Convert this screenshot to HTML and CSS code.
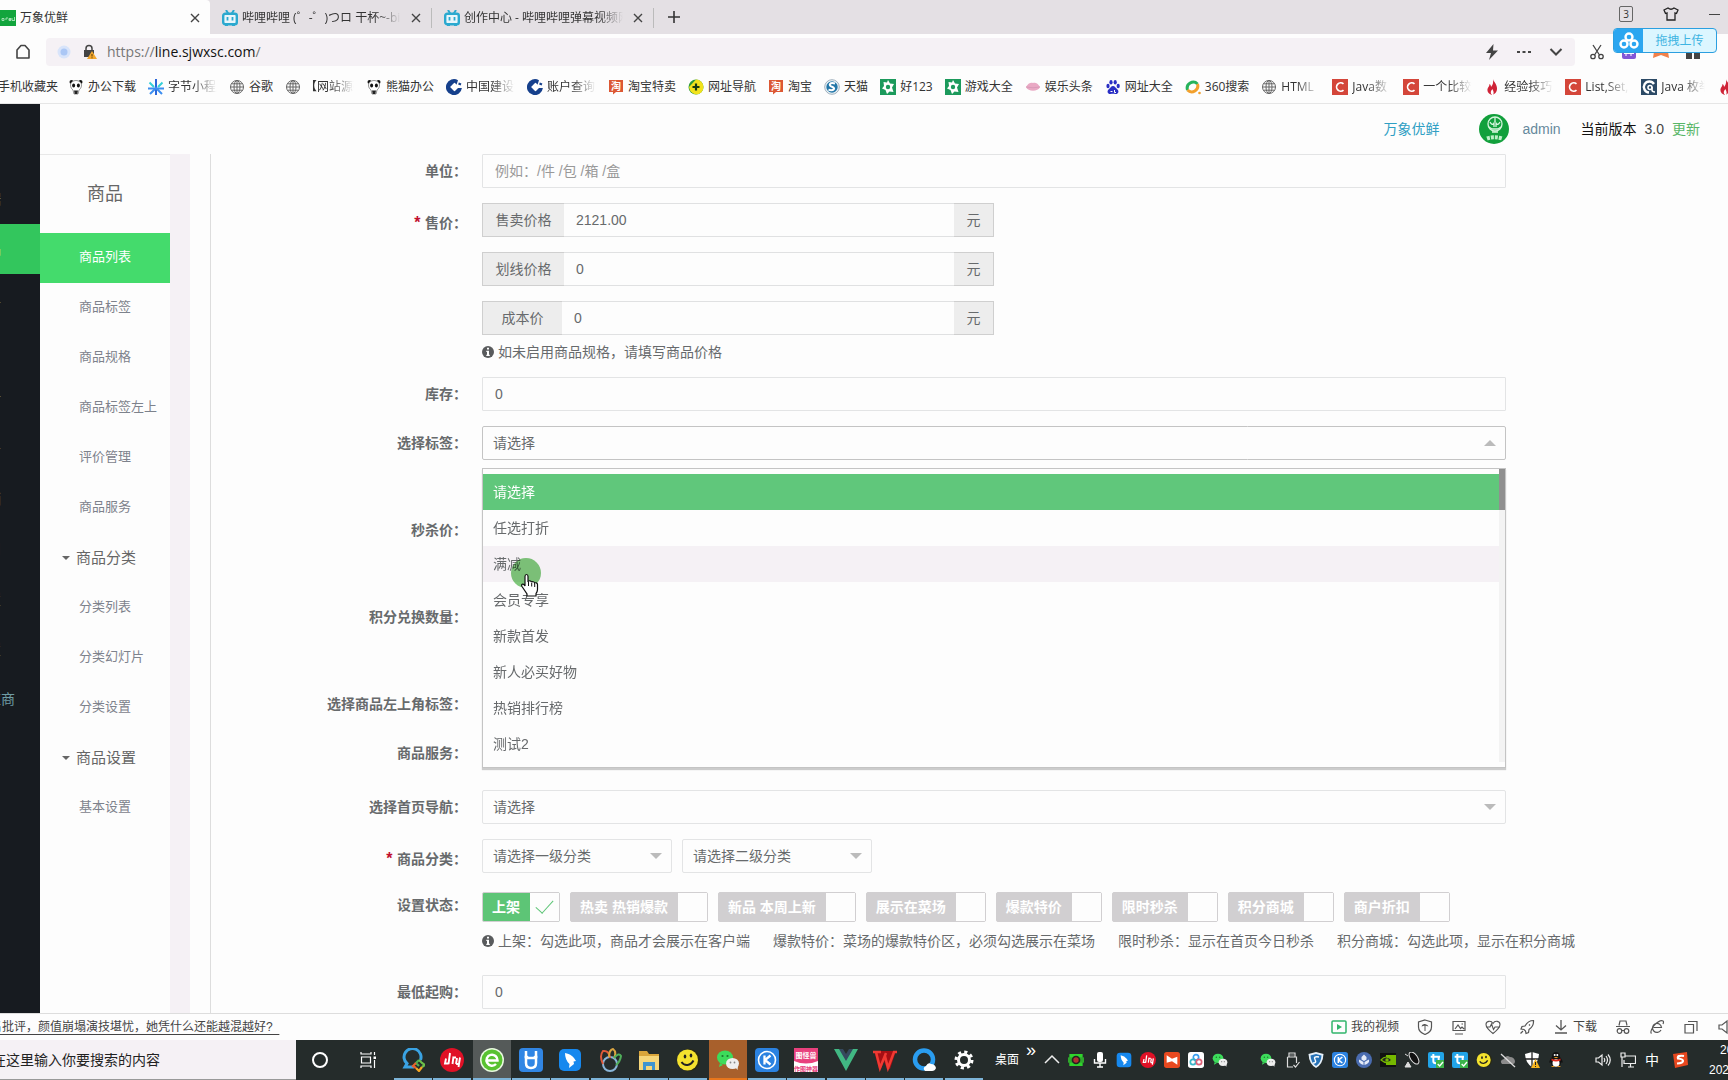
FILE: index.html
```html
<!DOCTYPE html>
<html lang="zh-CN">
<head>
<meta charset="utf-8">
<title>万象优鲜</title>
<link rel="stylesheet" href="styles.css">
</head>
<body>
<svg class="defs" aria-hidden="true">
  <symbol id="i-bili" viewBox="0 0 16 16"><path d="M4 0l2.500 4M12 0L9.500 4" stroke="#2ba9cf" stroke-width="2"/><rect x="1.200" y="3.800" width="13.600" height="10.500" rx="2" fill="#e9f6fa" stroke="#2ba9cf" stroke-width="2.400"/><path d="M5.500 7v3.500M10.500 7v3.500" stroke="#2ba9cf" stroke-width="1.800"/><path d="M3 15.500h3M10 15.500h3" stroke="#2ba9cf"/></symbol>
  <symbol id="i-close" viewBox="0 0 10 10"><path d="M1 1l8 8M9 1l-8 8" stroke="#444" stroke-width="1.400"/></symbol>
  <symbol id="i-globe" viewBox="0 0 16 16"><g fill="none" stroke="#666" stroke-width="1"><circle cx="8" cy="8" r="6.500"/><ellipse cx="8" cy="8" rx="3" ry="6.500"/><path d="M1.500 8h13M8 1.500v13M2.500 4.800h11M2.500 11.200h11"/></g></symbol>
  <symbol id="i-panda" viewBox="0 0 16 16"><circle cx="3.500" cy="3" r="2" fill="#111"/><circle cx="12.500" cy="3" r="2" fill="#111"/><path d="M2.500 6a5.500 4.500 0 0 1 11 0c0 3-1.500 4-2.500 5l-1 4H6l-1-4C4 10 2.500 9 2.500 6z" fill="#fff" stroke="#777" stroke-width=".8"/><ellipse cx="5.600" cy="6.500" rx="1.500" ry="2" fill="#111"/><ellipse cx="10.400" cy="6.500" rx="1.500" ry="2" fill="#111"/><path d="M6 11.500h4L9.300 15H6.700z" fill="#222"/></symbol>
  <symbol id="i-snow" viewBox="0 0 16 16"><path d="M8 0v16" stroke="#2a66d9" stroke-width="2"/><path d="M0 9.500h7M16 9.500H9" stroke="#3d8ef0" stroke-width="1.800"/><path d="M2 15l6-6 6 6" stroke="#3d8ef0" stroke-width="2" fill="none"/><path d="M1.500 3.500L6 8M14.500 3.500L10 8" stroke="#35d0d8" stroke-width="2"/></symbol>
  <symbol id="i-ccb" viewBox="0 0 16 16"><path d="M12 1.200A8 8 0 1 0 15.900 9h-4L8.500 12.200 4.300 8l4.200-4.200 2 2z" fill="#16408c"/><path d="M8.500 3.800L12.500 8l-4 4.200L4.300 8z" fill="#fff"/><path d="M12.500 4.500l2.500 1" stroke="#16408c" stroke-width="2"/></symbol>
  <symbol id="i-tao" viewBox="0 0 16 16"><path d="M1 1h14v12H8l-3 2.500V13H1z" fill="#dc5834"/><text x="8" y="11" text-anchor="middle" font-size="10" font-weight="700" fill="#fff">淘</text></symbol>
  <symbol id="i-plus" viewBox="0 0 16 16"><circle cx="8" cy="8" r="7.500" fill="#2c9b3a"/><path d="M8 .5A7.500 7.500 0 0 1 8 15.500 9 9 0 0 1 1 8z" fill="#f2e21c"/><path d="M8 4.500v7M4.500 8h7" stroke="#173a12" stroke-width="2.200"/></symbol>
  <symbol id="i-sogou" viewBox="0 0 16 16"><circle cx="8" cy="8" r="7.300" fill="#eef4f8" stroke="#9fb0bd"/><circle cx="8" cy="8" r="5.700" fill="#2477a8"/><path d="M11 4.500c-5.500-1.500-7 2-3 3.300s2 4.300-3.500 3" fill="none" stroke="#fff" stroke-width="2"/></symbol>
  <symbol id="i-hao" viewBox="0 0 16 16"><path d="M0 0h16v16H0z" fill="#1c9a5c"/><path d="M8 1l2 3.500 4 .5-2 3.500 1.500 4.500-4-.5L7 15l-1.500-4L2 9.500 4 7 3.500 3l3.500.500z" fill="#fff"/><circle cx="8" cy="8" r="2.200" fill="#1c9a5c"/></symbol>
  <symbol id="i-lips" viewBox="0 0 16 16"><path d="M1 8c2-4 5-5 7-4 2-1 5 0 7 4-2 5-12 5-14 0z" fill="#e9a9c4"/><path d="M1 8q7 1.500 14 0" stroke="#d99ab8" fill="none"/></symbol>
  <symbol id="i-paw" viewBox="0 0 16 16"><g fill="#2a2fc4"><ellipse cx="3" cy="7" rx="1.600" ry="2.200"/><ellipse cx="6" cy="3.200" rx="1.600" ry="2.300"/><ellipse cx="10.200" cy="3.200" rx="1.600" ry="2.300"/><ellipse cx="13.200" cy="7" rx="1.600" ry="2.200"/><path d="M8 7c2 0 2.500 2 4.500 3.500 2 2 .5 5-2 4.500-2-.4-3-.4-5 0-2.500.5-4-2.500-2-4.500C5.500 9 6 7 8 7z"/></g><path d="M5.500 12.500h2M9.500 11v2.500h1.500" stroke="#fff" fill="none"/></symbol>
  <symbol id="i-360" viewBox="0 0 16 16"><path d="M2.500 11A6 6 0 0 1 12.500 5" fill="none" stroke="#27b35c" stroke-width="3"/><path d="M12.500 5a6 6 0 0 1-10 6" fill="none" stroke="#f2a02c" stroke-width="3"/><circle cx="14.500" cy="14" r="1.300" fill="#f2a02c"/></symbol>
  <symbol id="i-c" viewBox="0 0 16 16"><path d="M0 0h16v16H0z" fill="#d4463a"/><path d="M11.500 4.800A4.200 4.200 0 1 0 11.500 11.200" fill="none" stroke="#fff" stroke-width="1.700"/></symbol>
  <symbol id="i-flame" viewBox="0 0 16 16"><path d="M9 0c.5 3 3.500 4 4 9 .2 4-2 6-5 7-3-1-5-3-4.500-6C4 8 5.500 7.500 5.500 5c1 .5 1.500 1.500 1.500 3C9 6 9.500 3 9 0z" fill="#cf2337"/><path d="M8 16c-2-2-1.500-4 .5-6 .500 2 2 3 .5 6z" fill="#fff"/></symbol>
  <symbol id="i-cg" viewBox="0 0 16 16"><path d="M0 0h16v16H0z" fill="#2c4a66"/><path d="M13 5A5.500 5.500 0 1 0 8 13.500" fill="none" stroke="#fff" stroke-width="2.400"/><circle cx="9" cy="8.500" r="2" fill="none" stroke="#fff" stroke-width="1.600"/><path d="M11 8v3q0 2 3 2" fill="none" stroke="#fff" stroke-width="1.600"/></symbol>
  <symbol id="i-info" viewBox="0 0 12 12"><circle cx="6" cy="6" r="6" fill="#595b5d"/><path d="M5 1.800h2v1.700H5zM4.300 4.800H7v4h.8v1.100H4.300V8.800H5V5.900h-.7z" fill="#fff"/></symbol>
  <symbol id="i-wechat" viewBox="0 0 24 24"><ellipse cx="9" cy="9.500" rx="8" ry="7" fill="#3ddc5b"/><path d="M4 15l-1 4 4-2z" fill="#3ddc5b"/><circle cx="6.500" cy="8" r="1.100" fill="#1c7a2e"/><circle cx="11.500" cy="8" r="1.100" fill="#1c7a2e"/><ellipse cx="16.500" cy="15.500" rx="6.500" ry="5.500" fill="#eee"/><path d="M19 19l2.500 3 .5-4z" fill="#eee"/><circle cx="14.500" cy="14.500" r=".9" fill="#888"/><circle cx="18.500" cy="14.500" r=".9" fill="#888"/></symbol>
  <symbol id="i-k" viewBox="0 0 24 24"><rect width="24" height="24" rx="4" fill="#2b82e0"/><circle cx="12" cy="12" r="8.500" fill="none" stroke="#fff" stroke-width="1.600"/><path d="M9.500 7.500v9M15.500 7.500L10 12l5.500 4.500" fill="none" stroke="#fff" stroke-width="2.300"/></symbol>
  <symbol id="i-bird" viewBox="0 0 24 24"><rect x="1" y="1" width="22" height="22" rx="5" fill="#1688ee"/><path d="M7 5q6 1 9 5l2 3-2.500.5.500 2.500-5 4 .5-4Q7 12 7 5z" fill="#fff"/></symbol>
  <symbol id="i-dhp" viewBox="0 0 24 24"><circle cx="12" cy="12" r="12" fill="#e01126"/><path d="M10 5L8.500 16M6 10.500L5 15.500h3.500M12.500 16l1-7.500M16 16l1-6M13 9.500h3M20 9.500L18.500 19M16 16h3" fill="none" stroke="#fff" stroke-width="1.900"/></symbol>
  <symbol id="i-smile" viewBox="0 0 24 24"><circle cx="13" cy="12" r="11" fill="#2a2a12"/><circle cx="11.500" cy="12" r="10.500" fill="#f4e22e"/><ellipse cx="9" cy="8.500" rx="1.300" ry="2" fill="#222"/><ellipse cx="15" cy="7.500" rx="1.300" ry="2" fill="#222"/><path d="M5.500 14c3 4.500 9 4 12-1.500" fill="none" stroke="#222" stroke-width="2"/></symbol>
  <symbol id="i-t" viewBox="0 0 24 24"><rect width="24" height="24" rx="3" fill="#22a4e8"/><path d="M8 3v11q0 3 4 3M4 7h14M16 7v5" fill="none" stroke="#fff" stroke-width="3"/><rect x="12" y="12" width="12" height="12" fill="#3cb54a"/><path d="M14.500 18l3 3 5-6" fill="none" stroke="#fff" stroke-width="2"/></symbol>
</svg>

<div class="screen">
  <header class="chrome">
    <div class="tabs">
      <div class="tab active">
        <svg class="fav" viewBox="0 0 16 16"><path d="M0 0h16v16H0z" fill="#12a53d"/><path d="M2 8.500h2v2H2zM6 10V8h2M9 9.500h2V8.500H9v2h2M12 8v2.500h2M14.500 7v4" fill="none" stroke="#9fe0b0"/></svg>
        <span class="tab-title">万象优鲜</span>
        <button class="close" aria-label="关闭"><svg viewBox="0 0 10 10"><use href="#i-close"/></svg></button>
      </div>
      <div class="tab">
        <svg class="fav"><use href="#i-bili"/></svg>
        <span class="tab-title fade">哔哩哔哩 (゜-゜)つロ 干杯~-bili</span>
        <button class="close" aria-label="关闭"><svg><use href="#i-close"/></svg></button>
      </div>
      <div class="tab">
        <svg class="fav"><use href="#i-bili"/></svg>
        <span class="tab-title fade">创作中心 - 哔哩哔哩弹幕视频网</span>
        <button class="close" aria-label="关闭"><svg><use href="#i-close"/></svg></button>
      </div>
      <button class="newtab" aria-label="新标签页"><svg viewBox="0 0 12 12"><path d="M6 0v12M0 6h12" stroke="#333" stroke-width="1.600"/></svg></button>
      <div class="winbtns">
        <button class="count">3</button>
        <button aria-label="皮肤"><svg width="16" height="14" viewBox="0 0 16 14"><path d="M5 1q3 2.500 6 0l4 2-1.500 3.500-1.500-.5V13H4V6l-1.500.5L1 3z" fill="none" stroke="#222" stroke-width="1.300"/></svg></button>
        <button aria-label="最小化"><svg width="12" height="14" viewBox="0 0 12 14"><path d="M0 7.500h11" stroke="#444"/></svg></button>
      </div>
    </div>

    <div class="toolbar">
      <button class="home" aria-label="主页"><svg width="16" height="16" viewBox="0 0 16 16"><path d="M2 6l4-4.500h4L14 6v8H2z" fill="none" stroke="#444" stroke-width="1.600" stroke-linejoin="round"/></svg></button>
      <div class="omnibox">
        <svg width="14" height="16" viewBox="0 0 14 16"><circle cx="7" cy="8" r="6.500" fill="#d8e4fa"/><circle cx="7" cy="8" r="3.500" fill="#abc7f5"/></svg>
        <svg width="14" height="16" viewBox="0 0 14 16"><path d="M3 7V4.500a3 3 0 0 1 6 0V7" fill="none" stroke="#444" stroke-width="1.500"/><path d="M1 6h10v7H1z" fill="#444"/><path d="M9 7l5 8H4z" fill="#f2a72e"/><path d="M9 10v2.500M9 13.300v1" stroke="#5b3a00"/></svg>
        <span class="url">https://<b>line.sjwxsc.com</b>/</span>
        <div class="omni-right">
          <svg width="14" height="16" viewBox="0 0 14 16"><path d="M8.500 0L1 9h5l-2 7 9-9.500H8z" fill="#444"/></svg>
          <svg width="14" height="4" viewBox="0 0 14 4"><path d="M0 1h3v2H0zM5.500 1h3v2h-3zM11 1h3v2h-3z" fill="#444"/></svg>
          <svg width="14" height="10" viewBox="0 0 14 10"><path d="M1.500 2L7 7.500 12.500 2" fill="none" stroke="#444" stroke-width="2"/></svg>
        </div>
      </div>
      <div class="ext">
        <svg width="16" height="16" viewBox="0 0 16 16"><g fill="none" stroke="#444" stroke-width="1.300"><path d="M4 1l6.500 10M12 1L5.500 11"/><circle cx="4" cy="12.500" r="2.200"/><circle cx="12" cy="12.500" r="2.200"/></g></svg>
        <svg width="16" height="16" viewBox="0 0 16 16"><rect x="1" y="1" width="14" height="14" rx="2" fill="#8257d6"/><path d="M5 7v5M10 7v5M3 9.500h10" stroke="#fff"/></svg>
        <svg width="16" height="16" viewBox="0 0 16 16"><path d="M2 1h12l2 13-8-3-8 3z" fill="#f0814a"/></svg>
        <svg width="16" height="16" viewBox="0 0 16 16"><path d="M1 1h6v6H1zM9 1h6v6H9zM1 9h6v6H1zM9 9h6v6H9z" fill="#444"/></svg>
      </div>
      <button class="upload">
        <span class="upload-ic"><svg width="20" height="18" viewBox="0 0 20 18"><g fill="none" stroke="#fff" stroke-width="2.400"><circle cx="10" cy="5" r="3.500"/><circle cx="5" cy="12" r="3.500"/><circle cx="15" cy="12" r="3.500"/></g></svg></span>
        <span class="upload-tx">拖拽上传</span>
      </button>
    </div>

    <nav class="bookmarks">
      <a href="#" class="first">手机收藏夹</a>
      <a href="#"><svg><use href="#i-panda"/></svg><span>办公下载</span></a>
      <a href="#"><svg><use href="#i-snow"/></svg><span class="fade w4">字节小程序</span></a>
      <a href="#"><svg><use href="#i-globe"/></svg><span>谷歌</span></a>
      <a href="#"><svg><use href="#i-globe"/></svg><span class="fade w4">【网站源码</span></a>
      <a href="#"><svg><use href="#i-panda"/></svg><span>熊猫办公</span></a>
      <a href="#"><svg><use href="#i-ccb"/></svg><span class="fade w4">中国建设银</span></a>
      <a href="#"><svg><use href="#i-ccb"/></svg><span class="fade w4">账户查询页</span></a>
      <a href="#"><svg><use href="#i-tao"/></svg><span>淘宝特卖</span></a>
      <a href="#"><svg><use href="#i-plus"/></svg><span>网址导航</span></a>
      <a href="#"><svg><use href="#i-tao"/></svg><span>淘宝</span></a>
      <a href="#"><svg><use href="#i-sogou"/></svg><span>天猫</span></a>
      <a href="#"><svg><use href="#i-hao"/></svg><span>好123</span></a>
      <a href="#"><svg><use href="#i-hao"/></svg><span>游戏大全</span></a>
      <a href="#"><svg><use href="#i-lips"/></svg><span>娱乐头条</span></a>
      <a href="#"><svg><use href="#i-paw"/></svg><span>网址大全</span></a>
      <a href="#"><svg><use href="#i-360"/></svg><span>360搜索</span></a>
      <a href="#"><svg><use href="#i-globe"/></svg><span class="fade w3">HTML</span></a>
      <a href="#"><svg><use href="#i-c"/></svg><span class="fade w3">Java数</span></a>
      <a href="#"><svg><use href="#i-c"/></svg><span class="fade w4">一个比较好</span></a>
      <a href="#"><svg><use href="#i-flame"/></svg><span class="fade w4">经验技巧大</span></a>
      <a href="#"><svg><use href="#i-c"/></svg><span class="fade w5">List,Set,M</span></a>
      <a href="#"><svg><use href="#i-cg"/></svg><span class="fade w5">Java 枚举</span></a>
      <a href="#" aria-label="书签"><svg><use href="#i-flame"/></svg></a>
    </nav>
  </header>

  <div class="app">
    <nav class="rail">
      <a href="#">数据</a>
      <a href="#" class="on">商品</a>
      <a href="#">订单</a>
      <a href="#">用户</a>
      <a href="#">售后</a>
      <a href="#">财务</a>
      <a href="#">营销</a>
      <a href="#">应用</a>
      <a href="#">配置</a>
      <a href="#">设置</a>
      <a href="#" class="wide">供应商</a>
    </nav>
    <div class="main">
      <header class="topbar">
        <a href="#" class="shop">万象优鲜</a>
        <svg class="avatar" viewBox="0 0 30 30"><circle cx="15" cy="15" r="15" fill="#12a03c"/><g fill="none" stroke="#d5f5dc" stroke-width="1.300"><ellipse cx="16" cy="10" rx="7" ry="7"/><path d="M16 3v5M11 8q2 4 4 1v4M21 8q-2 4-4 1v4M10 13l3 2h6l3-2M13 18h6"/></g><path d="M8 24.500q7-2.500 15 0" fill="none" stroke="#bdf0c8" stroke-width="4" stroke-dasharray="3 1"/></svg>
        <a href="#" class="user">admin</a>
        <span class="version">当前版本</span>
        <span class="number">3.0</span>
        <a href="#" class="update">更新</a>
      </header>
      <div class="body">
        <nav class="side">
          <h2>商品</h2>
          <a href="#" class="on">商品列表</a>
          <a href="#">商品标签</a>
          <a href="#">商品规格</a>
          <a href="#">商品标签左上</a>
          <a href="#">评价管理</a>
          <a href="#">商品服务</a>
          <button class="group">商品分类</button>
          <a href="#">分类列表</a>
          <a href="#">分类幻灯片</a>
          <a href="#">分类设置</a>
          <button class="group">商品设置</button>
          <a href="#">基本设置</a>
        </nav>
        <form class="form">
          <div class="row">
            <label for="unit">单位：</label>
            <div><input class="field" id="unit" type="text" placeholder="例如：/件 /包 /箱 /盒"></div>
          </div>
          <div class="row">
            <label class="req" for="price">售价：</label>
            <div class="prices">
              <div class="addon"><span class="pre">售卖价格</span><input id="price" type="text" value="2121.00"><span class="suf">元</span></div>
              <div class="addon"><span class="pre">划线价格</span><input aria-label="划线价格" type="text" value="0"><span class="suf">元</span></div>
              <div class="addon"><span class="pre short">成本价</span><input aria-label="成本价" type="text" value="0"><span class="suf">元</span></div>
              <p class="help"><svg><use href="#i-info"/></svg><span>如未启用商品规格，请填写商品价格</span></p>
            </div>
          </div>
          <div class="row">
            <label for="stock">库存：</label>
            <div><input class="field" id="stock" type="text" value="0"></div>
          </div>
          <div class="row tall">
            <label for="tag">选择标签：</label>
            <div class="dd">
              <div class="select open"><select id="tag"><option>请选择</option></select></div>
              <div class="menu">
                <ul role="listbox" aria-label="选择标签">
                  <li role="option" aria-selected="true" class="sel">请选择</li>
                  <li role="option">任选打折</li>
                  <li role="option" class="hover">满减</li>
                  <li role="option">会员专享</li>
                  <li role="option">新款首发</li>
                  <li role="option">新人必买好物</li>
                  <li role="option">热销排行榜</li>
                  <li role="option">测试2</li>
                </ul>
                <div class="track"><div class="thumb"></div></div>
                <svg class="cursor" viewBox="0 0 34 40"><circle class="halo" cx="17" cy="15" r="15"/><path d="M16 28V18.500q0-2 1.500-2t1.500 2V24q.500-1.500 2-1.200t1.500 1.500q.500-1 1.800-.6t1.300 1.400q.500-.6 1.700-.2t1.200 1.700v5q0 2-1.500 4v2.400h-9V36l-5-7.500q-1-2 .500-2.400T16 28z" fill="#fff" stroke="#111" stroke-width="1.200"/><path d="M19.500 24v4M22.700 25v3.500M25.700 26v3" stroke="#111"/></svg>
              </div>
            </div>
          </div>
          <div class="row tall">
            <label for="flash">秒杀价：</label>
            <div><input class="field" id="flash" type="text"></div>
          </div>
          <div class="row tall">
            <label for="points">积分兑换数量：</label>
            <div><input class="field" id="points" type="text"></div>
          </div>
          <div class="row">
            <label for="corner">选择商品左上角标签：</label>
            <div><input class="field" id="corner" type="text"></div>
          </div>
          <div class="row service">
            <span class="lab">商品服务：</span>
            <div></div>
          </div>
          <div class="row">
            <label for="nav">选择首页导航：</label>
            <div class="select"><select id="nav"><option>请选择</option></select></div>
          </div>
          <div class="row">
            <label class="req" for="cat">商品分类：</label>
            <div class="pair">
              <div class="select"><select id="cat"><option>请选择一级分类</option></select></div>
              <div class="select"><select aria-label="二级分类"><option>请选择二级分类</option></select></div>
            </div>
          </div>
          <div class="row tall">
            <span class="lab">设置状态：</span>
            <div>
              <div class="checks">
                <label><span>上架</span><input type="checkbox" checked></label>
                <label><span>热卖 热销爆款</span><input type="checkbox"></label>
                <label><span>新品 本周上新</span><input type="checkbox"></label>
                <label><span>展示在菜场</span><input type="checkbox"></label>
                <label><span>爆款特价</span><input type="checkbox"></label>
                <label><span>限时秒杀</span><input type="checkbox"></label>
                <label><span>积分商城</span><input type="checkbox"></label>
                <label><span>商户折扣</span><input type="checkbox"></label>
              </div>
              <p class="help"><svg><use href="#i-info"/></svg><span>上架：勾选此项，商品才会展示在客户端</span><span>爆款特价：菜场的爆款特价区，必须勾选展示在菜场</span><span>限时秒杀：显示在首页今日秒杀</span><span>积分商城：勾选此项，显示在积分商城</span></p>
            </div>
          </div>
          <div class="row last">
            <label for="min">最低起购：</label>
            <div><input class="field" id="min" type="text" value="0"></div>
          </div>
        </form>
      </div>
    </div>
  </div>

  <div class="status">
    <a href="#" class="news">名批评，颜值崩塌演技堪忧，她凭什么还能越混越好?&nbsp;&nbsp;</a>
    <div class="tools">
      <button class="txt"><svg viewBox="0 0 16 16"><rect x="1" y="2" width="14" height="12" rx="1" fill="none" stroke="#31b56b" stroke-width="1.500"/><path d="M6 5l5 3-5 3z" fill="#31b56b"/></svg>我的视频</button>
      <svg viewBox="0 0 16 16"><path d="M8 1l6.500 2v5q0 5-6.500 7.500Q1.500 13 1.500 8V3z" fill="none" stroke="#555" stroke-width="1.200"/><path d="M4.500 7.500Q5 4.500 8 5t3.500 2.500L8 6.500zM7.500 6h1v6h-1z" fill="#555"/></svg>
      <svg viewBox="0 0 16 16"><path d="M2 2.500h12v9H2zM4 15h8M4 10l3-4 2.500 3.500L11 8l2 2M10.500 5h1.500" fill="none" stroke="#555" stroke-width="1.200"/></svg>
      <svg viewBox="0 0 16 16"><path d="M8 14.500Q1 9 1 5.500C1 2 6 1 8 4.500 10 1 15 2 15 5.500 15 9 8 14.500 8 14.500zM1 8h4l1.500-3 2 5.500L10 8h5" fill="none" stroke="#555" stroke-width="1.100"/></svg>
      <svg viewBox="0 0 16 16"><path d="M14.500 1.500Q9 1.500 6 7L3 7.500 2 10l3 .5L6.500 12l.5 2.500 2.500-1L10 10.500q5-3.500 4.500-9zM4 12l-2.500 2.500M10 5.500l1 1" fill="none" stroke="#555" stroke-width="1.200"/></svg>
      <button class="txt"><svg viewBox="0 0 16 16"><path d="M8 1v10M3 6.500L8 11l5-4.500M2 14h12" fill="none" stroke="#555" stroke-width="1.300"/></svg>下载</button>
      <svg viewBox="0 0 16 16"><path d="M4 6.500L5 2h6l1 4.500M1 7.500h14M7 11.500h2" fill="none" stroke="#555" stroke-width="1.200"/><circle cx="4.500" cy="12" r="2.300" fill="none" stroke="#555" stroke-width="1.200"/><circle cx="11.500" cy="12" r="2.300" fill="none" stroke="#555" stroke-width="1.200"/></svg>
      <svg viewBox="0 0 16 16"><path d="M4.500 8.500h8A4.500 4.500 0 1 0 12 11M2.500 14.500Q.500 13 5 6.500 11 .500 14 2q1 .5 0 3" fill="none" stroke="#555" stroke-width="1.200"/></svg>
      <svg viewBox="0 0 16 16"><path d="M2 5.500h8.500V14H2zM5 2.500h9V12" fill="none" stroke="#555" stroke-width="1.200"/></svg>
      <svg viewBox="0 0 16 16"><path d="M2 6h3l5-4v12l-5-4H2z" fill="none" stroke="#555" stroke-width="1.200"/></svg>
    </div>
  </div>

  <footer class="taskbar">
    <input class="search" type="text" aria-label="搜索" placeholder="在这里输入你要搜索的内容">
    <div class="system">
      <svg viewBox="0 0 18 18"><circle cx="9" cy="9" r="7" fill="none" stroke="#fff" stroke-width="2"/></svg>
      <svg viewBox="0 0 18 18"><path d="M2 1v2h10V1M2 17v-2h10v2M2.500 6h9v6h-9zM15.500 1v3M15.500 9v8" fill="none" stroke="#fff" stroke-width="1.200"/><path d="M14.500 5.500h2.500v2.500h-2.500z" fill="#fff"/></svg>
    </div>
    <div class="apps">
      <span><svg viewBox="0 0 24 24"><path d="M13 19H4l2-3.500A8.500 8.500 0 1 1 19.500 12" fill="none" stroke="#3aa3e3" stroke-width="3"/><g fill="none" stroke-width="2.200"><path d="M18 18l-3-3 3-3" stroke="#4caf50"/><path d="M18 12l3 3 3 2-3 2" stroke="#6cc04a"/><path d="M21 19l-3 4-3-3" stroke="#f5a623"/><path d="M15 20l-3-2 3-3" stroke="#e8622c"/></g></svg></span>
      <span><svg><use href="#i-dhp"/></svg></span>
      <span class="cur"><svg viewBox="0 0 24 24"><circle cx="12" cy="12" r="12" fill="#e9f9e0"/><circle cx="12" cy="12" r="10.500" fill="#58c230"/><path d="M7 12.500h10.500A5.500 5.500 0 1 0 16 16" fill="none" stroke="#fff" stroke-width="2.500"/></svg></span>
      <span class="more"><svg viewBox="0 0 24 24"><rect width="24" height="24" rx="4" fill="#3186e4"/><path d="M5.500 9h3M15.500 9h3M7 3v5l2 2h6l2-2V3M7 10v5q0 5 5 5t5-5v-5" fill="none" stroke="#fff" stroke-width="2.500"/></svg></span>
      <span><svg><use href="#i-bird"/></svg></span>
      <span><svg viewBox="0 0 24 24" fill="none" stroke-width="2"><circle cx="12" cy="16" r="7" stroke="#8ab6d8"/><path d="M5 16Q1 8 5 3q6-1 7 7" stroke="#e05a3a"/><path d="M11 9q0-7 4-8 4 3 1 9" stroke="#d9a441"/><path d="M16 10q5-6 7-2-1 6-5 9" stroke="#4fae5a"/></svg></span>
      <span class="more"><svg viewBox="0 0 24 24"><path d="M2 3h8l2 3h10v16H2z" fill="#d9a53b"/><path d="M2 8h20v14H2z" fill="#f6d67a"/><path d="M6 22v-8h12v8h-3v-4H9v4z" fill="#3f94cf"/></svg></span>
      <span><svg><use href="#i-smile"/></svg></span>
      <span class="alert"><svg><use href="#i-wechat"/></svg></span>
      <span><svg><use href="#i-k"/></svg></span>
      <span><svg viewBox="0 0 24 24"><path d="M0 0h24v24H0z" fill="#fff"/><path d="M0 0h24v13q-12 5-24 0z" fill="#e8417d"/><text x="12" y="10" text-anchor="middle" font-size="7" font-weight="700" fill="#fff">图怪兽</text><text x="12" y="23" text-anchor="middle" font-size="6" font-weight="700" fill="#e8417d">作图神器</text></svg></span>
      <span><svg viewBox="0 0 24 24"><path d="M0 1h7l5 9 5-9h7L12 23z" fill="#41b883"/><path d="M5 1h4l3 5 3-5h4l-7 12z" fill="#35495e"/></svg></span>
      <span class="more"><svg viewBox="0 0 24 24"><path d="M1 3h22l-6 18h-3l-3-8-3 8H6z" fill="#a50f14"/><path d="M0 4h8M3 4l4 16 6-15M12 8l3 12 6-16h3" fill="none" stroke="#ef3a33" stroke-width="2.500"/></svg></span>
      <span><svg viewBox="0 0 24 24"><circle cx="12" cy="11.500" r="9" fill="none" stroke="#2a9df0" stroke-width="4.500"/><path d="M13 23q-3-3 1-5 2-4 5-2 4 0 5 4-1 3-4 3z" fill="#fff"/></svg></span>
      <span><svg viewBox="0 0 24 24"><circle cx="12" cy="12" r="5.500" fill="none" stroke="#fff" stroke-width="3"/><circle cx="12" cy="12" r="8" fill="none" stroke="#fff" stroke-width="3" stroke-dasharray="3.140 3.140"/></svg></span>
    </div>
    <span class="desk">桌面</span><span class="raq">»</span>
    <div class="tray">
      <span><svg viewBox="0 0 16 16"><path d="M1 11l7-7 7 7" fill="none" stroke="#eee" stroke-width="1.500"/></svg></span>
      <span><svg viewBox="0 0 24 24"><path d="M2 3h20v18H2z" fill="#2fd42c"/><path d="M0 8h24v8H0z" fill="#2fa82c"/><circle cx="12" cy="12" r="6.500" fill="#222"/><circle cx="12" cy="12" r="4" fill="#b03030"/></svg></span>
      <span><svg viewBox="0 0 16 16"><rect x="5" y="0" width="6" height="10" rx="2" fill="#fff"/><path d="M2.500 7v4h11V7M8 11v4M5 15h6" fill="none" stroke="#fff" stroke-width="1.400"/></svg></span>
      <span><svg><use href="#i-bird"/></svg></span>
      <span><svg><use href="#i-dhp"/></svg></span>
      <span><svg viewBox="0 0 24 24"><rect width="24" height="24" rx="4" fill="#e8491f"/><path d="M4 5l8 5 8-3v12l-8-5-8 2z" fill="#fff"/></svg></span>
      <span><svg viewBox="0 0 24 24"><rect width="24" height="24" rx="4" fill="#fff"/><g fill="none" stroke-width="2.500"><circle cx="12" cy="8" r="4" stroke="#3a9ff0"/><circle cx="7.500" cy="15" r="4" stroke="#3ab5c8"/><circle cx="16.500" cy="15" r="4" stroke="#e0637a"/></g></svg></span>
      <span><svg><use href="#i-wechat"/></svg></span>
      <span></span>
      <span><svg><use href="#i-wechat"/></svg></span>
      <span><svg viewBox="0 0 16 16"><path d="M5 5V1h6v4M3.500 5h9v6M3.500 5v10H9M7 2.500v1M9 2.500v1M9.500 13l2 2 4-5" fill="none" stroke="#ddd" stroke-width="1.200"/></svg></span>
      <span><svg viewBox="0 0 16 16"><path d="M8 0l7.500 2Q15 12 8 16 1 12 .500 2z" fill="#e7f1fa"/><path d="M8 2l5.500 1.500Q13 11 8 14 3 11 2.500 3.500z" fill="#2773b8"/><path d="M11 5Q5 4 7 7.500T5 11" fill="none" stroke="#fff" stroke-width="1.500"/></svg></span>
      <span><svg><use href="#i-k"/></svg></span>
      <span><svg viewBox="0 0 16 16"><circle cx="8" cy="8" r="8" fill="#4a6cb0"/><path d="M8 2.500L10.500 5v2.500L8 9 5.500 7.500V5zM3 7.500L5 8.500 7.500 10v3L5 12 3 10zM13 7.500l-2 1L8.500 10v3l2.500-1 2-2z" fill="#e3eaf8"/></svg></span>
      <span><svg viewBox="0 0 16 16"><path d="M0 1h16v14H0z" fill="#111"/><path d="M6 3h10v10H6z" fill="#76b900"/><path d="M1 8q5-6 11 0-5 5-11 0z" fill="#222" stroke="#76b900" stroke-width="1.200"/><circle cx="7" cy="8" r="1.700" fill="#76b900"/></svg></span>
      <span><svg viewBox="0 0 16 16"><ellipse cx="10" cy="6" rx="3.500" ry="7" transform="rotate(-35 10 6)" fill="#111" stroke="#ddd"/><path d="M1 15h6L4 10zM1 2l3 2" fill="#ddd" stroke="#ddd"/></svg></span>
      <span><svg><use href="#i-t"/></svg></span>
      <span><svg><use href="#i-t"/></svg></span>
      <span><svg><use href="#i-smile"/></svg></span>
      <span><svg viewBox="0 0 16 16"><path d="M2 12q-3-4 2-5 2-5 6-2 4 0 5 4 0 3-2 3z" fill="#8b8b8b"/><path d="M1 2l14 13" stroke="#ddd" stroke-width="1.300"/></svg></span>
      <span><svg viewBox="0 0 16 16"><path d="M8 0l7 2Q14.500 11 8 15 1.500 11 1 2z" fill="#fff"/><path d="M8 0v15M1 7h14" stroke="#222" stroke-width="1.300"/><path d="M11.500 7l4.500 9H7z" fill="#f7b51e"/><path d="M11.500 10v3M11.500 14v1" stroke="#222"/></svg></span>
      <span><svg viewBox="0 0 16 16"><path d="M4 5q0-5 4-5t4 5q4 5 2 6l-1-1q0 5-5 5t-5-5l-1 1q-2-1 2-6z" fill="#111"/><ellipse cx="8" cy="11" rx="3.500" ry="3.800" fill="#fff"/><path d="M3.500 6.500q4.500 2.500 9 0v2q-4.500 2-9 0z" fill="#e02b20"/><circle cx="6.700" cy="3" r="1" fill="#fff"/><circle cx="9.300" cy="3" r="1" fill="#fff"/><path d="M5.500 5h5L8 6.300zM3 15q2-2 4 0zM9 15q2-2 4 0z" fill="#f6a21c"/></svg></span>
    </div>
    <div class="tray2">
      <svg viewBox="0 0 16 16"><path d="M1 6h2.500L7 3v10L3.500 10H1zM9 6q1.500 2 0 4M11 4q3 4 0 8M13 2.500q4.500 5.500 0 11" fill="none" stroke="#eee" stroke-width="1.200"/></svg>
      <svg viewBox="0 0 16 16"><path d="M5 4h10.500v7.500H4V8M8 15h6M10.500 12v3M1 1h4v4H1zM2 5v10" fill="none" stroke="#eee" stroke-width="1.200"/></svg>
      <span>中</span>
      <svg viewBox="0 0 16 16"><path d="M1 2l14-2 1 13-13 3z" fill="#e8481f"/><path d="M12 4Q5 3 6 6.500q5 .5 5 2.500t-6 2.500" fill="none" stroke="#fff" stroke-width="2.200"/></svg>
    </div>
    <div class="clock"><span class="time">20:2</span><span>2020/</span></div>
  </footer>
</div>
</body>
</html>
```
FILE: styles.css
```css
* { box-sizing: border-box; }
html { background: #fdfdfd; }
body {
  margin: 0;
  font: 14px/20px "Liberation Sans", "Noto Sans CJK SC", sans-serif;
  color: #676a6c;
  overflow-x: hidden;
}
a { text-decoration: none; color: inherit; }
button, input, select { font: inherit; color: inherit; }
button { background: none; border: 0; padding: 0; }
svg { display: block; flex: none; }
p, h2, ul { margin: 0; padding: 0; }
.defs { position: absolute; width: 0; height: 0; }
.screen { display: flex; flex-direction: column; min-height: 100vh; overflow: hidden; }

/* browser chrome */
.chrome { font: 12px/16px "Open Sans", "Noto Sans CJK SC", sans-serif; color: #333; border-bottom: 1px solid #e6e6e6; }
.tabs { display: flex; align-items: center; height: 34px; background: #e4e0e4; }
.tab { display: flex; align-items: center; gap: 4px; width: 222px; height: 34px; padding: 2px 10px 0 12px; }
.tab.active { width: 210px; padding-left: 0; background: #fdfdfd; border-radius: 0 4px 0 0; }
.tab + .tab::after { content: ""; width: 1px; height: 20px; margin-right: -10px; margin-left: 6px; background: #bbb; }
.fav { width: 16px; height: 16px; }
.tab-title { flex: 1; white-space: nowrap; overflow: hidden; }
.fade { overflow: hidden; white-space: nowrap; -webkit-mask-image: linear-gradient(to left, transparent 0, #000 24px); mask-image: linear-gradient(to left, transparent 0, #000 24px); }
.close { width: 10px; height: 10px; margin-left: 6px; }
.close svg { width: 10px; height: 10px; }
.newtab { margin-left: 14px; }
.newtab svg { width: 12px; height: 12px; }
.winbtns { display: flex; align-items: center; gap: 30px; margin-left: auto; margin-right: 7px; margin-bottom: 6px; }
.count { width: 14px; height: 16px; border: 1px solid #666; border-radius: 2px; font-size: 10px; line-height: 14px; }

.toolbar { position: relative; display: flex; align-items: center; height: 36px; padding-left: 15px; }
.home { margin-right: 15px; }
.omnibox { display: flex; align-items: center; gap: 12px; flex: 1; height: 28px; padding: 0 12px 0 11px; background: #f5f1f5; border-radius: 4px; }
.url { font-size: 14px; color: #777; margin-left: -2px; }
.url b { font-weight: 400; color: #111; }
.omni-right { display: flex; align-items: center; gap: 18px; margin-left: auto; }
.ext { display: flex; gap: 16px; width: 153px; padding-left: 14px; }
.upload { position: absolute; right: 11px; top: -6px; display: flex; width: 104px; height: 25px; border: 1px solid #2b9fe0; border-radius: 4px; overflow: hidden; background: #dcf6ff; }
.upload-ic { display: flex; align-items: center; justify-content: center; width: 29px; height: 23px; background: #2ba6f0; }
.upload-tx { flex: 1; line-height: 23px; color: #3eb4e2; }

.bookmarks { display: flex; align-items: center; gap: 12px; height: 33px; white-space: nowrap; overflow: hidden; }
.bookmarks a { display: flex; align-items: center; gap: 4px; flex: none; }
.bookmarks svg { width: 16px; height: 16px; }
.bookmarks .first { margin-left: -2px; margin-right: -2px; }
.w3 { width: 39px; }
.w4 { width: 49px; }
.w5 { width: 44px; }

/* application */
.app { display: flex; flex: 1; }
.rail { width: 40px; padding-top: 70px; background: #171b20; color: #6f9ca4; overflow: hidden; }
.rail a { display: flex; justify-content: flex-end; align-items: center; height: 50px; padding-right: 39px; white-space: nowrap; }
.rail a.on { background: #33c65d; color: #e6f2a0; }
.rail a.wide { padding-right: 25px; }
.main { flex: 1; min-width: 0; display: flex; flex-direction: column; }
.topbar { display: flex; align-items: center; justify-content: flex-end; height: 50px; padding-right: 28px; }
.shop { color: #2f9fc4; }
.avatar { width: 30px; height: 30px; margin: 0 13px 0 40px; }
.user { color: #66899c; }
.version, .number { color: #111; }
.version { margin-left: 20px; }
.number { margin: 0 8px; color: #444; }
.update { color: #58b668; }

.body { display: flex; flex: 1; }
.side { width: 130px; border-top: 1px solid #e8e8e8; font-size: 13px; color: #7d828c; }
.side h2 { height: 78px; padding: 0 20px; font-size: 18px; font-weight: 400; line-height: 78px; text-align: center; color: #666; }
.side a { display: block; height: 50px; padding-left: 39px; line-height: 48px; white-space: nowrap; }
.side a.on { background: #44db6c; color: #fff; }
.group { display: flex; align-items: center; gap: 6px; width: 100%; height: 50px; padding-left: 22px; font-size: 15px; color: #666; }
.group::before { content: ""; border: 4px solid transparent; border-top-color: #666; border-bottom: 0; }

.form { flex: 1; min-width: 0; margin-left: 40px; border-left: 1px solid #ddd; padding: 0 222px 4px 0; position: relative; }
.form::before { content: ""; position: absolute; left: -41px; top: 0; bottom: 0; width: 20px; background: #f5f1f5; }
.row { display: grid; grid-template-columns: 271px 1fr; min-height: 34px; margin-bottom: 15px; }
.row.tall { min-height: 72px; }
.row.service { min-height: 39px; }
.row.last { margin-bottom: 0; }
.row > label, .lab { padding: 7px 15px 0 0; text-align: right; font-weight: 700; white-space: nowrap; }
.row > .req { padding-top: 8px; }
.req::before { content: "* "; color: #c1102e; font-size: 16px; line-height: 24px; }
.field, .select select { display: block; width: 100%; height: 34px; border: 1px solid #e3e4e5; border-radius: 1px; background: #fdfdfd; padding: 0 12px; outline: 0; }
.field::placeholder { color: #999; }
.select { position: relative; height: 34px; }
.select select { appearance: none; padding: 0 10px; border-radius: 2px; }
.select::after { content: ""; position: absolute; right: 10px; top: 14px; border: 6px solid transparent; border-top-color: #bbb; border-bottom: 0; }
.select.open select { border-color: #c4c4c4; }
.select.open::after { border: 6px solid transparent; border-bottom-color: #bbb; border-top: 0; }
.prices { display: grid; gap: 15px; width: 50%; }
.addon { display: flex; height: 34px; line-height: 32px; }
.addon input { flex: 1; min-width: 0; border: solid #e0e1e2; border-width: 1px 0; padding: 0 12px; background: #fdfdfd; outline: 0; }
.addon span { background: #ededed; border: 1px solid #cfcfcf; text-align: center; }
.addon .pre { width: 82px; border-right: 0; }
.addon .short { width: 80px; }
.addon .suf { width: 40px; border-left: 0; }
.help { display: flex; align-items: center; height: 20px; white-space: nowrap; }
.prices .help { margin-top: -8px; }
.help svg { width: 12px; height: 12px; margin-right: 4px; }
.help span + span { margin-left: 23px; }

.dd { position: relative; z-index: 2; }
.menu { position: absolute; left: 0; right: 0; top: 42px; display: flex; padding-bottom: 5px; background: #fdfdfd; border: 1px solid #c4c4c4; box-shadow: 0 2px 1px #ccc; }
.menu ul { flex: 1; list-style: none; padding-top: 5px; }
.menu li { height: 36px; padding: 0 10px; line-height: 36px; }
.menu .sel { background: #60c77b; color: #fff; }
.menu .hover { background: #f5f1f5; }
.track { width: 6px; background: #f3f3f3; }
.thumb { height: 41px; background: #8f8f8f; }
.cursor { position: absolute; left: 26px; top: 89px; width: 34px; height: 40px; }
.halo { fill: #80ca7c; mix-blend-mode: multiply; }
.pair { display: flex; gap: 10px; }
.pair .select { width: 190px; }
.checks { display: flex; gap: 10px; padding: 4px 0 9px; }
.checks label { display: flex; flex: none; height: 30px; border: 1px solid #d1cfd1; border-radius: 2px; background: #d1cfd1; color: #fff; font-weight: 700; line-height: 28px; white-space: nowrap; }
.checks span { padding: 0 10px 0 9px; }
.checks input { appearance: none; width: 29px; height: 28px; margin: 0; background: #fdfdfd; }
.checks label:has(:checked) { background: #5dc576; }
.checks input:checked { display: flex; align-items: center; justify-content: center; }
.checks input:checked::before { content: ""; width: 16px; height: 8px; margin-top: -5px; border: solid #5dc576; border-width: 0 0 1px 1px; transform: rotate(-48deg); }

/* browser status bar */
.status { display: flex; align-items: center; justify-content: space-between; height: 27px; border-top: 1px solid #ddd; font-size: 12px; color: #444; white-space: nowrap; }
.news { margin-left: -10px; text-decoration: underline; text-underline-offset: 3px; }
.tools { display: flex; align-items: center; gap: 18px; margin-right: -5px; }
.tools svg { width: 16px; height: 16px; }
.txt { display: flex; align-items: center; gap: 4px; }

/* taskbar */
.taskbar { display: flex; align-items: center; height: 40px; background: #252c2b; color: #fff; font-size: 12px; white-space: nowrap; overflow: hidden; }
.search { width: 304px; height: 40px; margin-left: -8px; padding: 0; border: 0; border-bottom: 1px solid #999; background: #f5f1f5; font-size: 14px; outline: 0; }
.search::placeholder { color: #222; opacity: 1; }
.system { display: flex; gap: 30px; padding: 0 17px 0 15px; }
.system svg { width: 18px; height: 18px; }
.apps { display: flex; justify-content: space-between; width: 589px; }
.apps span { display: flex; align-items: center; justify-content: center; width: 38px; height: 40px; box-shadow: inset 0 -2px #7db4d8; }
.apps svg { width: 24px; height: 24px; }
.apps .cur { background: #555a59; }
.apps .alert { background: #a8602c; box-shadow: inset 0 -2px #e8761c; }
.desk { margin-left: 12px; }
.raq { margin: 0 4px 20px 7px; font-size: 18px; }
.tray { display: flex; }
.tray span { display: flex; align-items: center; justify-content: center; width: 24px; height: 40px; }
.tray svg { width: 16px; height: 16px; }
.tray2 { display: flex; align-items: center; gap: 9px; margin-left: auto; font-size: 14px; }
.tray2 svg { width: 16px; height: 16px; }
.tray2 svg:last-child { margin-left: 4px; }
.clock { width: 19px; margin-left: 21px; overflow: hidden; }
.clock span { display: block; }
.clock .time { padding-left: 11px; }
```
